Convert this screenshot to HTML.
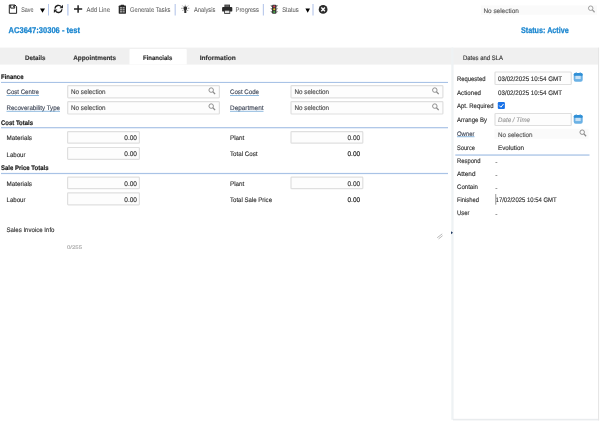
<!DOCTYPE html>
<html><head><meta charset="utf-8">
<style>
html,body{margin:0;padding:0;background:#fff;}
body{width:600px;height:421px;overflow:hidden;}
svg{display:block;will-change:transform;font-family:"Liberation Sans",sans-serif;text-rendering:geometricPrecision;}
</style></head><body>
<svg width="600" height="421" viewBox="0 0 600 421">

<!-- save -->
<path d="M9.3 5h5.7l1.6 1.6v6.7h-7.3z" fill="#fff" stroke="#222" stroke-width="1"/>
<path d="M10.7 5v3.1h4v-3.1" fill="none" stroke="#222" stroke-width="1"/>
<path d="M13.6 5.6v1.8" stroke="#222" stroke-width="0.9"/>
<path d="M40 8.6h5l-2.5 4.2z" fill="#000"/>
<!-- refresh -->
<g fill="none" stroke="#222" stroke-width="1.35">
<path d="M54.9 8.6A3.6 3.6 0 0 1 61.3 6.7"/>
<path d="M62 9.2A3.6 3.6 0 0 1 55.6 11.1"/>
</g>
<path d="M63 4.8v3.5h-3.5z" fill="#222"/>
<path d="M53.9 13v-3.5h3.5z" fill="#222"/>
<!-- plus -->
<path d="M78.1 5.2v7.6M74 9h8.2" stroke="#222" stroke-width="1.5" fill="none"/>
<!-- clipboard -->
<rect x="118.7" y="5.6" width="7.3" height="8.1" rx="0.6" fill="#2a2a2a"/>
<rect x="120.6" y="4.7" width="3.5" height="1.6" rx="0.4" fill="#2a2a2a"/>
<path d="M120 7.1h2.1v1.5h-2.1zM122.6 7.1h2.1v1.5h-2.1zM120 9.1h2.1v1.5h-2.1zM122.6 9.1h2.1v1.5h-2.1zM120 11.1h2.1v1.5h-2.1zM122.6 11.1h2.1v1.5h-2.1z" fill="#9a9a9a"/>
<!-- bulb -->
<path d="M185.3 6.3a1.9 1.9 0 0 1 1.9 1.9c0 1-0.8 1.5-0.9 2.3v2.4h-2v-2.4c-0.1-0.8-0.9-1.3-0.9-2.3a1.9 1.9 0 0 1 1.9-1.9z" fill="#2e2e2e"/>
<path d="M185.3 4.8v1M181.2 8.3h1.5M187.9 8.3h1.5M182.4 5.6l1 1M188.2 5.6l-1 1M182.4 11l1-1M188.2 11l-1-1" stroke="#4a4a4a" stroke-width="0.55"/>
<!-- printer -->
<rect x="224.4" y="4.6" width="5.6" height="3" fill="#3a3a3a"/><rect x="225.3" y="5.4" width="3.8" height="1.4" fill="#6a6a6a"/>
<rect x="222.1" y="7" width="10.2" height="4.6" rx="0.9" fill="#2a2a2a"/>
<rect x="224.6" y="10.2" width="5.2" height="3.3" fill="#ddd" stroke="#2a2a2a" stroke-width="0.8"/>
<!-- traffic light -->
<rect x="272" y="4.7" width="4.4" height="9" rx="0.9" fill="#3a3a3a"/>
<path d="M270.3 5.6h1.7v1.3zM278.1 5.6h-1.7v1.3zM270.3 8.5h1.7v1.3zM278.1 8.5h-1.7v1.3zM270.3 11.4h1.7v1.3zM278.1 11.4h-1.7v1.3z" fill="#3a3a3a"/>
<circle cx="274.2" cy="6.4" r="1" fill="#e8405c"/><circle cx="274.2" cy="9.2" r="1" fill="#ecc52c"/><circle cx="274.2" cy="12" r="1" fill="#46b04a"/>
<path d="M305.4 8.6h4.6l-2.3 4.1z" fill="#000"/>
<!-- close -->
<circle cx="323.1" cy="9.4" r="4.4" fill="#2b2b2b"/>
<path d="M321.3 7.6l3.6 3.6M324.9 7.6l-3.6 3.6" stroke="#fff" stroke-width="1.4"/>
<rect x="48" y="4" width="1.00" height="11.50" fill="#b5c7ea"/>
<rect x="67" y="4" width="1.70" height="11.50" fill="#c9d6f1"/>
<rect x="174.6" y="4" width="1.20" height="11.50" fill="#bccbec"/>
<rect x="262.8" y="4" width="1.20" height="11.50" fill="#bccbec"/>
<rect x="312.4" y="4" width="1.20" height="11.50" fill="#bccbec"/>
<text x="21.2" y="12.3" font-size="6.8" fill="#606060" stroke="#606060" stroke-width="0.05" textLength="12.40" lengthAdjust="spacingAndGlyphs">Save</text>
<text x="86.5" y="12.3" font-size="6.8" fill="#606060" stroke="#606060" stroke-width="0.05" textLength="23.50" lengthAdjust="spacingAndGlyphs">Add Line</text>
<text x="130" y="12.3" font-size="6.8" fill="#606060" stroke="#606060" stroke-width="0.05" textLength="40.50" lengthAdjust="spacingAndGlyphs">Generate Tasks</text>
<text x="194" y="12.3" font-size="6.8" fill="#606060" stroke="#606060" stroke-width="0.05" textLength="21.40" lengthAdjust="spacingAndGlyphs">Analysis</text>
<text x="235.5" y="12.3" font-size="6.8" fill="#606060" stroke="#606060" stroke-width="0.05" textLength="23.50" lengthAdjust="spacingAndGlyphs">Progress</text>
<text x="282.2" y="12.3" font-size="6.8" fill="#606060" stroke="#606060" stroke-width="0.05" textLength="16.60" lengthAdjust="spacingAndGlyphs">Status</text>
<rect x="481" y="5.4" width="116.00" height="9.30" fill="#fafafa"/>
<text x="483.4" y="12.5" font-size="6.6" fill="#5a5a5a" stroke="#5a5a5a" stroke-width="0.14" textLength="35.40" lengthAdjust="spacingAndGlyphs">No selection</text>
<g fill="none" stroke="#9c9c9c"><circle cx="590.7" cy="8.2" r="2.25" stroke-width="0.95"/><path d="M592.4000000000001 9.899999999999999l2.2 2.3" stroke-width="1.3"/></g>
<text x="8.5" y="32.5" font-size="8.4" fill="#1985cf" font-weight="bold" stroke="#1985cf" stroke-width="0.25" textLength="71.50" lengthAdjust="spacingAndGlyphs">AC3647:30306 - test</text>
<text x="521" y="33.1" font-size="8.3" fill="#1985cf" font-weight="bold" stroke="#1985cf" stroke-width="0.25" textLength="47.80" lengthAdjust="spacingAndGlyphs">Status: Active</text>
<rect x="0" y="47.6" width="598.60" height="17.00" fill="#f0f0f0"/>
<path d="M129.5 64.6V49.8a0.8 0.8 0 0 1 0.8-0.8h55.6a0.8 0.8 0 0 1 0.8 0.8V64.6z" fill="#fff"/>
<text x="25.1" y="60.1" font-size="6.6" fill="#333" font-weight="bold" stroke="#333" stroke-width="0.14" textLength="20.30" lengthAdjust="spacingAndGlyphs">Details</text>
<text x="73.2" y="60.1" font-size="6.6" fill="#333" font-weight="bold" stroke="#333" stroke-width="0.14" textLength="42.80" lengthAdjust="spacingAndGlyphs">Appointments</text>
<text x="143" y="60.1" font-size="6.6" fill="#2a2a2a" font-weight="bold" stroke="#2a2a2a" stroke-width="0.14" textLength="29.30" lengthAdjust="spacingAndGlyphs">Financials</text>
<text x="199.7" y="60.1" font-size="6.6" fill="#333" font-weight="bold" stroke="#333" stroke-width="0.14" textLength="36.10" lengthAdjust="spacingAndGlyphs">Information</text>
<text x="463" y="60.1" font-size="6.5" fill="#333" stroke="#333" stroke-width="0.14" textLength="40.00" lengthAdjust="spacingAndGlyphs">Dates and SLA</text>
<rect x="451.3" y="47.6" width="2.30" height="372.20" fill="#eef2f4"/>
<rect x="453" y="418.8" width="146.10" height="1.60" fill="#e9ecee"/>
<rect x="598" y="47.6" width="1.10" height="372.80" fill="#e6e6e6"/>
<text x="1" y="79.4" font-size="6.7" fill="#111" font-weight="bold" stroke="#111" stroke-width="0.14" textLength="22.50" lengthAdjust="spacingAndGlyphs">Finance</text>
<rect x="1" y="81.9" width="447.00" height="1.10" fill="#a9c3e6"/>
<rect x="67.7" y="85.6" width="151.70" height="12.30" rx="0.8" fill="#fdfdfd" stroke="#dfdfdf" stroke-width="1.2"/>
<rect x="67.7" y="101.7" width="151.70" height="12.30" rx="0.8" fill="#fdfdfd" stroke="#dfdfdf" stroke-width="1.2"/>
<rect x="291" y="85.6" width="151.90" height="12.30" rx="0.8" fill="#fdfdfd" stroke="#dfdfdf" stroke-width="1.2"/>
<rect x="291" y="101.7" width="151.90" height="12.30" rx="0.8" fill="#fdfdfd" stroke="#dfdfdf" stroke-width="1.2"/>
<text x="6.5" y="94.4" font-size="6.6" fill="#3f4757" stroke="#3f4757" stroke-width="0.14" textLength="32.50" lengthAdjust="spacingAndGlyphs">Cost Centre</text>
<path d="M6.5 95.5H39" stroke="#5b9bd0" stroke-width="0.7"/>
<text x="71" y="94.1" font-size="6.7" fill="#4a4a4a" stroke="#4a4a4a" stroke-width="0.14" textLength="34.60" lengthAdjust="spacingAndGlyphs">No selection</text>
<g fill="none" stroke="#8a8a8a"><circle cx="211.2" cy="90.1" r="2.25" stroke-width="0.95"/><path d="M212.89999999999998 91.8l2.2 2.3" stroke-width="1.3"/></g>
<text x="6.5" y="110.2" font-size="6.6" fill="#3f4757" stroke="#3f4757" stroke-width="0.14" textLength="53.50" lengthAdjust="spacingAndGlyphs">Recoverability Type</text>
<path d="M6.5 111.3H60" stroke="#5b9bd0" stroke-width="0.7"/>
<text x="71" y="110" font-size="6.7" fill="#4a4a4a" stroke="#4a4a4a" stroke-width="0.14" textLength="34.60" lengthAdjust="spacingAndGlyphs">No selection</text>
<g fill="none" stroke="#8a8a8a"><circle cx="211.2" cy="106.1" r="2.25" stroke-width="0.95"/><path d="M212.89999999999998 107.8l2.2 2.3" stroke-width="1.3"/></g>
<text x="230" y="94.4" font-size="6.6" fill="#3f4757" stroke="#3f4757" stroke-width="0.14" textLength="29.00" lengthAdjust="spacingAndGlyphs">Cost Code</text>
<path d="M230 95.5H259" stroke="#5b9bd0" stroke-width="0.7"/>
<text x="294.5" y="94.1" font-size="6.7" fill="#4a4a4a" stroke="#4a4a4a" stroke-width="0.14" textLength="34.60" lengthAdjust="spacingAndGlyphs">No selection</text>
<g fill="none" stroke="#8a8a8a"><circle cx="434.8" cy="90.1" r="2.25" stroke-width="0.95"/><path d="M436.5 91.8l2.2 2.3" stroke-width="1.3"/></g>
<text x="230" y="110.2" font-size="6.6" fill="#3f4757" stroke="#3f4757" stroke-width="0.14" textLength="33.50" lengthAdjust="spacingAndGlyphs">Department</text>
<path d="M230 111.3H263.5" stroke="#5b9bd0" stroke-width="0.7"/>
<text x="294.5" y="110" font-size="6.7" fill="#4a4a4a" stroke="#4a4a4a" stroke-width="0.14" textLength="34.60" lengthAdjust="spacingAndGlyphs">No selection</text>
<g fill="none" stroke="#8a8a8a"><circle cx="434.8" cy="106.1" r="2.25" stroke-width="0.95"/><path d="M436.5 107.8l2.2 2.3" stroke-width="1.3"/></g>
<text x="1" y="125.0" font-size="6.7" fill="#111" font-weight="bold" stroke="#111" stroke-width="0.14" textLength="32.00" lengthAdjust="spacingAndGlyphs">Cost Totals</text>
<rect x="1" y="127.1" width="447.00" height="1.20" fill="#a9c3e6"/>
<rect x="67.6" y="131.6" width="71.80" height="11.60" rx="0.8" fill="#fdfdfd" stroke="#dfdfdf" stroke-width="1.2"/>
<rect x="67.6" y="147.5" width="71.80" height="11.90" rx="0.8" fill="#fdfdfd" stroke="#dfdfdf" stroke-width="1.2"/>
<rect x="291" y="131.6" width="71.80" height="11.60" rx="0.8" fill="#fdfdfd" stroke="#dfdfdf" stroke-width="1.2"/>
<text x="6.5" y="140.0" font-size="6.6" fill="#303030" stroke="#303030" stroke-width="0.14" textLength="25.50" lengthAdjust="spacingAndGlyphs">Materials</text>
<text x="124.3" y="140.0" font-size="6.7" fill="#333" stroke="#333" stroke-width="0.14" textLength="12.70" lengthAdjust="spacingAndGlyphs">0.00</text>
<text x="6.5" y="156.5" font-size="6.6" fill="#303030" stroke="#303030" stroke-width="0.14" textLength="19.00" lengthAdjust="spacingAndGlyphs">Labour</text>
<text x="124.3" y="156.0" font-size="6.7" fill="#333" stroke="#333" stroke-width="0.14" textLength="12.70" lengthAdjust="spacingAndGlyphs">0.00</text>
<text x="230" y="140.3" font-size="6.6" fill="#303030" stroke="#303030" stroke-width="0.14" textLength="14.30" lengthAdjust="spacingAndGlyphs">Plant</text>
<text x="347.5" y="140.1" font-size="6.7" fill="#333" stroke="#333" stroke-width="0.14" textLength="12.70" lengthAdjust="spacingAndGlyphs">0.00</text>
<text x="347.5" y="156.4" font-size="6.7" fill="#111" stroke="#111" stroke-width="0.14" textLength="12.70" lengthAdjust="spacingAndGlyphs">0.00</text>
<text x="230" y="156.4" font-size="6.6" fill="#303030" stroke="#303030" stroke-width="0.14" textLength="27.50" lengthAdjust="spacingAndGlyphs">Total Cost</text>
<text x="1" y="170.3" font-size="6.7" fill="#111" font-weight="bold" stroke="#111" stroke-width="0.14" textLength="47.50" lengthAdjust="spacingAndGlyphs">Sale Price Totals</text>
<rect x="1" y="172.9" width="447.00" height="1.20" fill="#a9c3e6"/>
<rect x="67.6" y="177.1" width="71.80" height="11.60" rx="0.8" fill="#fdfdfd" stroke="#dfdfdf" stroke-width="1.2"/>
<rect x="67.6" y="192.8" width="71.80" height="12.10" rx="0.8" fill="#fdfdfd" stroke="#dfdfdf" stroke-width="1.2"/>
<rect x="291" y="177.1" width="71.80" height="11.60" rx="0.8" fill="#fdfdfd" stroke="#dfdfdf" stroke-width="1.2"/>
<text x="6.5" y="185.5" font-size="6.6" fill="#303030" stroke="#303030" stroke-width="0.14" textLength="25.50" lengthAdjust="spacingAndGlyphs">Materials</text>
<text x="124.3" y="185.5" font-size="6.7" fill="#333" stroke="#333" stroke-width="0.14" textLength="12.70" lengthAdjust="spacingAndGlyphs">0.00</text>
<text x="6.5" y="202.0" font-size="6.6" fill="#303030" stroke="#303030" stroke-width="0.14" textLength="19.00" lengthAdjust="spacingAndGlyphs">Labour</text>
<text x="124.3" y="201.5" font-size="6.7" fill="#333" stroke="#333" stroke-width="0.14" textLength="12.70" lengthAdjust="spacingAndGlyphs">0.00</text>
<text x="230" y="185.8" font-size="6.6" fill="#303030" stroke="#303030" stroke-width="0.14" textLength="14.30" lengthAdjust="spacingAndGlyphs">Plant</text>
<text x="347.5" y="185.6" font-size="6.7" fill="#333" stroke="#333" stroke-width="0.14" textLength="12.70" lengthAdjust="spacingAndGlyphs">0.00</text>
<text x="347.5" y="201.9" font-size="6.7" fill="#111" stroke="#111" stroke-width="0.14" textLength="12.70" lengthAdjust="spacingAndGlyphs">0.00</text>
<text x="230" y="202.1" font-size="6.6" fill="#303030" stroke="#303030" stroke-width="0.14" textLength="42.00" lengthAdjust="spacingAndGlyphs">Total Sale Price</text>
<text x="6.5" y="231.9" font-size="6.6" fill="#303030" stroke="#303030" stroke-width="0.14" textLength="48.00" lengthAdjust="spacingAndGlyphs">Sales Invoice Info</text>
<text x="67" y="248.6" font-size="5.2" fill="#aaa" stroke="#aaa" stroke-width="0.14" textLength="15.00" lengthAdjust="spacingAndGlyphs">0/255</text>
<path d="M437.2 237.7L442.2 233.9M438.6 238.9L442.6 235.7" stroke="#8a8a8a" stroke-width="0.6" fill="none"/>
<path d="M451 231.3l2 1.5l-2 1.5z" fill="#1f3a63"/>
<text x="457" y="80.5" font-size="6.6" fill="#303030" stroke="#303030" stroke-width="0.14" textLength="28.50" lengthAdjust="spacingAndGlyphs">Requested</text>
<rect x="495" y="72" width="76.30" height="12.50" rx="0.8" fill="#fdfdfd" stroke="#dfdfdf" stroke-width="1.2"/>
<text x="498" y="80.5" font-size="6.6" fill="#303030" stroke="#303030" stroke-width="0.14" textLength="64.00" lengthAdjust="spacingAndGlyphs">03/02/2025 10:54 GMT</text>
<g transform="translate(573.4,72.2)"><rect x="0.3" y="0.8" width="9" height="8.8" rx="2" fill="#6ab1e5"/><rect x="0.3" y="0.8" width="9" height="3" rx="1.5" fill="#2f8fd6"/><rect x="2" y="3.6" width="5.3" height="3.3" fill="#c9e2f6"/><path d="M2.8 0v1.6M6.8 0v1.6" stroke="#4a9edd" stroke-width="0.9"/></g>
<text x="457" y="94.9" font-size="6.6" fill="#303030" stroke="#303030" stroke-width="0.14" textLength="24.00" lengthAdjust="spacingAndGlyphs">Actioned</text>
<text x="498" y="94.9" font-size="6.6" fill="#303030" stroke="#303030" stroke-width="0.14" textLength="64.00" lengthAdjust="spacingAndGlyphs">03/02/2025 10:54 GMT</text>
<text x="457" y="108.2" font-size="6.6" fill="#303030" stroke="#303030" stroke-width="0.14" textLength="36.50" lengthAdjust="spacingAndGlyphs">Apt. Required</text>
<rect x="497.8" y="102.1" width="7.1" height="6.9" rx="1.1" fill="#1a73e8"/><path d="M499.3 105.6l1.6 1.6l2.6-3.2" stroke="#fff" stroke-width="1" fill="none"/>
<text x="457" y="122.4" font-size="6.6" fill="#303030" stroke="#303030" stroke-width="0.14" textLength="30.00" lengthAdjust="spacingAndGlyphs">Arrange By</text>
<rect x="495" y="113.5" width="76.30" height="12.00" rx="0.8" fill="#fdfdfd" stroke="#dfdfdf" stroke-width="1.2"/>
<text x="498" y="122.4" font-size="6.5" fill="#9a9a9a" font-style="italic" stroke="#9a9a9a" stroke-width="0.14" textLength="32.00" lengthAdjust="spacingAndGlyphs">Date / Time</text>
<g transform="translate(573.4,114.2)"><rect x="0.3" y="0.8" width="9" height="8.8" rx="2" fill="#6ab1e5"/><rect x="0.3" y="0.8" width="9" height="3" rx="1.5" fill="#2f8fd6"/><rect x="2" y="3.6" width="5.3" height="3.3" fill="#c9e2f6"/><path d="M2.8 0v1.6M6.8 0v1.6" stroke="#4a9edd" stroke-width="0.9"/></g>
<text x="457" y="135.6" font-size="6.6" fill="#3f4757" stroke="#3f4757" stroke-width="0.14" textLength="17.50" lengthAdjust="spacingAndGlyphs">Owner</text>
<path d="M457 136.7H474.5" stroke="#5b9bd0" stroke-width="0.7"/>
<rect x="494.5" y="128.7" width="94.00" height="10.00" fill="#fafafa"/>
<text x="498" y="136.9" font-size="6.6" fill="#555" stroke="#555" stroke-width="0.14" textLength="34.50" lengthAdjust="spacingAndGlyphs">No selection</text>
<g fill="none" stroke="#8a8a8a"><circle cx="582.2" cy="132.2" r="2.25" stroke-width="0.95"/><path d="M583.9000000000001 133.89999999999998l2.2 2.3" stroke-width="1.3"/></g>
<text x="457" y="149.6" font-size="6.6" fill="#303030" stroke="#303030" stroke-width="0.14" textLength="18.00" lengthAdjust="spacingAndGlyphs">Source</text>
<text x="498" y="149.6" font-size="6.6" fill="#303030" stroke="#303030" stroke-width="0.14" textLength="26.00" lengthAdjust="spacingAndGlyphs">Evolution</text>
<rect x="455.3" y="154.4" width="134.20" height="1.30" fill="#a9c3e6"/>
<text x="457" y="163.3" font-size="6.6" fill="#303030" stroke="#303030" stroke-width="0.14" textLength="23.50" lengthAdjust="spacingAndGlyphs">Respond</text>
<text x="495.3" y="164.0" font-size="6.6" fill="#3a3a3a" stroke="#3a3a3a" stroke-width="0.14" textLength="2.20" lengthAdjust="spacingAndGlyphs">-</text>
<text x="457" y="176.2" font-size="6.6" fill="#303030" stroke="#303030" stroke-width="0.14" textLength="18.50" lengthAdjust="spacingAndGlyphs">Attend</text>
<text x="495.3" y="176.89999999999998" font-size="6.6" fill="#3a3a3a" stroke="#3a3a3a" stroke-width="0.14" textLength="2.20" lengthAdjust="spacingAndGlyphs">-</text>
<text x="457" y="189.1" font-size="6.6" fill="#303030" stroke="#303030" stroke-width="0.14" textLength="21.00" lengthAdjust="spacingAndGlyphs">Contain</text>
<text x="495.3" y="189.79999999999998" font-size="6.6" fill="#3a3a3a" stroke="#3a3a3a" stroke-width="0.14" textLength="2.20" lengthAdjust="spacingAndGlyphs">-</text>
<text x="457" y="202.1" font-size="6.6" fill="#303030" stroke="#303030" stroke-width="0.14" textLength="22.00" lengthAdjust="spacingAndGlyphs">Finished</text>
<text x="495.6" y="202.3" font-size="6.6" fill="#303030" stroke="#303030" stroke-width="0.14" textLength="61.10" lengthAdjust="spacingAndGlyphs">17/02/2025 10:54 GMT</text>
<rect x="495.1" y="194" width="1.20" height="10.70" fill="#a8a8a8"/>
<text x="457" y="215.4" font-size="6.6" fill="#303030" stroke="#303030" stroke-width="0.14" textLength="12.50" lengthAdjust="spacingAndGlyphs">User</text>
<text x="495.3" y="216.1" font-size="6.6" fill="#3a3a3a" stroke="#3a3a3a" stroke-width="0.14" textLength="2.20" lengthAdjust="spacingAndGlyphs">-</text>
</svg></body></html>
